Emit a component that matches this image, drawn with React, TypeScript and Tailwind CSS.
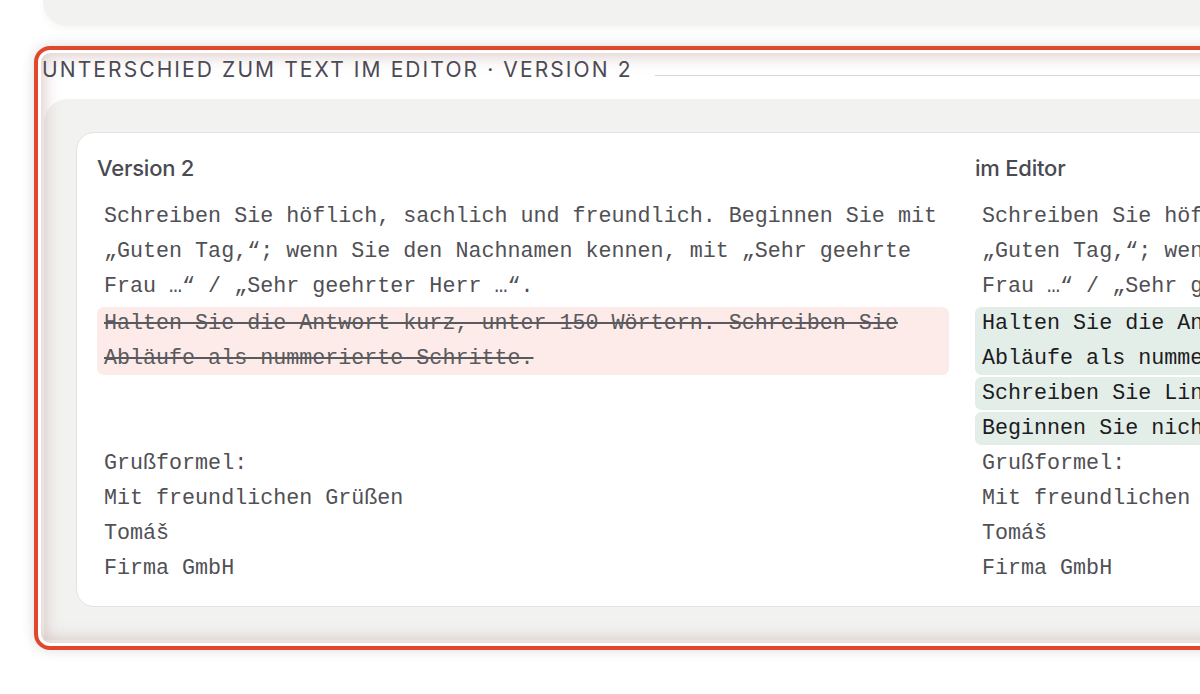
import React from "react";

type Seg =
  | { kind: "same"; lines: string[]; mb?: boolean }
  | { kind: "del"; lines: string[] }
  | { kind: "ins"; lines: string[] }
  | { kind: "blank"; count: number };

const intro = [
  "Schreiben Sie höflich, sachlich und freundlich. Beginnen Sie mit",
  "„Guten Tag,“; wenn Sie den Nachnamen kennen, mit „Sehr geehrte",
  "Frau …“ / „Sehr geehrter Herr …“.",
];
const rule = [
  "Halten Sie die Antwort kurz, unter 150 Wörtern. Schreiben Sie",
  "Abläufe als nummerierte Schritte.",
];
const closing = ["Grußformel:", "Mit freundlichen Grüßen", "Tomáš", "Firma GmbH"];

const left: Seg[] = [
  { kind: "same", lines: intro, mb: true },
  { kind: "del", lines: rule },
  { kind: "blank", count: 2 },
  { kind: "same", lines: closing },
];

const right: Seg[] = [
  { kind: "same", lines: intro, mb: true },
  { kind: "ins", lines: rule },
  { kind: "ins", lines: ["Schreiben Sie Links immer vollständig aus."] },
  { kind: "ins", lines: ["Beginnen Sie nicht mit einer Entschuldigung."] },
  { kind: "same", lines: closing },
];

function Lines({ lines, cls }: { lines: string[]; cls?: string }) {
  return (
    <>
      {lines.map((l, i) => (
        <div key={i} className={"whitespace-pre leading-[35px] " + (cls ?? "")}>
          {l}
        </div>
      ))}
    </>
  );
}

function Column({ title, segs }: { title: string; segs: Seg[] }) {
  return (
    <div className="w-[851px] shrink-0">
      <div className="text-[22px] leading-[28px] text-[#4a4a52] font-['Inter',sans-serif] font-medium tracking-[-0.01em] -ml-px">
        {title}
      </div>
      <div className="mt-[17px] font-['Liberation_Mono',monospace] text-[21.7px]">
        {segs.map((s, i) => {
          if (s.kind === "same")
            return (
              <div key={i} className={"px-[6px] text-[#505055] " + (s.mb ? "mb-[2px]" : "")}>
                <Lines lines={s.lines} />
              </div>
            );
          if (s.kind === "blank")
            return <div key={i} style={{ height: s.count * 35 }} />;
          if (s.kind === "del")
            return (
              <div key={i} className="py-px bg-clip-content rounded-[7px] bg-[#fcebe8] -ml-px">
                <div className="-my-px pl-[7px] pr-[6px] text-[#5a5a5e]">
                  <Lines lines={s.lines} cls="line-through decoration-[#5a5a5e]" />
                </div>
              </div>
            );
          return (
            <div key={i} className="py-px bg-clip-content rounded-[7px] bg-[#e3eee9] -ml-px">
              <div className="-my-px pl-[7px] pr-[6px] text-[#1c1c1e]">
                <Lines lines={s.lines} />
              </div>
            </div>
          );
        })}
      </div>
    </div>
  );
}

export default function App() {
  return (
    <div className="w-[1200px] h-[694px] overflow-hidden bg-white relative font-['Inter',sans-serif]">
      <div className="ml-[43px] w-[1400px] h-[26px] rounded-bl-[24px] bg-[#f2f2f0] shadow-[0_3px_8px_rgba(0,0,0,0.04)]" />
      <div className="relative ml-[34px] mt-[20px] w-[1400px] pt-[10px] pl-[9px] pb-[10px]">
        <div className="flex">
          <div className="text-[21px] leading-[28px] uppercase tracking-[0.1em] text-[#4a4a55] whitespace-nowrap -ml-px">
            Unterschied zum Text im Editor · Version 2
          </div>
          <div className="flex-1 h-px bg-[#d6d6d3] mt-[19px] ml-[22px]" />
        </div>
        <div className="mt-[15px] ml-px rounded-tl-[24px] bg-[#f2f2f0] pt-[33px] pl-[32px] pb-[33px]">
          <div className="w-[1800px] rounded-[18px] border border-[#e2e2df] bg-white pt-[21px] pl-[21px] pb-[20px] flex gap-[27px]">
            <Column title="Version 2" segs={left} />
            <Column title="im Editor" segs={right} />
          </div>
        </div>
        <div className="pointer-events-none absolute inset-0 rounded-[16px] border-[4px] border-[#e0472c] shadow-[0_0_14px_rgba(0,0,0,0.14),inset_0_0_0_3px_#ffffff,inset_0_0_16px_7px_rgba(140,90,80,0.28)]" />
      </div>
    </div>
  );
}
